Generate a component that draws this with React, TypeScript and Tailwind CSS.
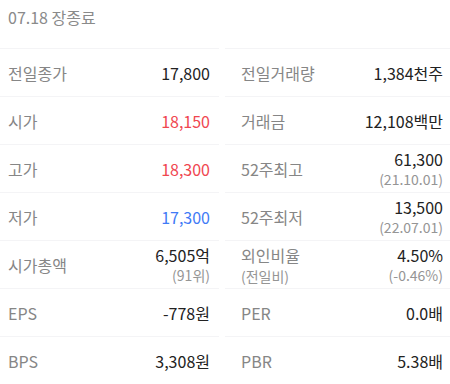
import React from 'react';

type Cell = {
  label: string;
  labelSub?: string;
  value: string;
  unit?: string;
  sub?: string;
  tone?: 'up' | 'down';
};

const rows: [Cell, Cell][] = [
  [
    { label: '전일종가', value: '17,800' },
    { label: '전일거래량', value: '1,384', unit: '천주' },
  ],
  [
    { label: '시가', value: '18,150', tone: 'up' },
    { label: '거래금', value: '12,108', unit: '백만' },
  ],
  [
    { label: '고가', value: '18,300', tone: 'up' },
    { label: '52주최고', value: '61,300', sub: '(21.10.01)' },
  ],
  [
    { label: '저가', value: '17,300', tone: 'down' },
    { label: '52주최저', value: '13,500', sub: '(22.07.01)' },
  ],
  [
    { label: '시가총액', value: '6,505', unit: '억', sub: '(91위)' },
    { label: '외인비율', labelSub: '(전일비)', value: '4.50%', sub: '(-0.46%)' },
  ],
  [
    { label: 'EPS', value: '-778', unit: '원' },
    { label: 'PER', value: '0.0', unit: '배' },
  ],
  [
    { label: 'BPS', value: '3,308', unit: '원' },
    { label: 'PBR', value: '5.38', unit: '배' },
  ],
];

const toneClass = (tone?: 'up' | 'down') =>
  tone === 'up' ? 'text-[#f0464f]' : tone === 'down' ? 'text-[#3f7bf6]' : 'text-[#222]';

const StatCell: React.FC<{ cell: Cell; side: 'left' | 'right' }> = ({ cell, side }) => (
  <div
    className={
      'h-12 flex items-center justify-between border-t border-[#f4f4f6] ' +
      (side === 'left' ? 'pl-2 pr-[9px] mr-[6px]' : 'pl-4 pr-[7px]')
    }
  >
    <div className="flex flex-col gap-[2px]">
      <span className="text-[16px] leading-[20px] text-[#868686]">{cell.label}</span>
      {cell.labelSub && <span className="text-[14px] leading-[18px] text-[#959595]">{cell.labelSub}</span>}
    </div>
    <div className="flex flex-col items-end">
      <span className={'text-[16px] leading-[20px] ' + toneClass(cell.tone)}>
        {cell.value}
        {cell.unit}
      </span>
      {cell.sub && <span className="text-[14px] leading-[20px] text-[#959595]">{cell.sub}</span>}
    </div>
  </div>
);

export default function App() {
  return (
    <div
      className="w-[450px] h-[384px] bg-white overflow-hidden"
      style={{ fontFamily: '"Noto Sans CJK KR", "Noto Sans", sans-serif' }}
    >
      <div className="h-12 px-2 pt-[5px]">
        <span className="text-[16px] leading-6 text-[#8a8a8a]">07.18 장종료</span>
      </div>
      <div className="grid grid-cols-[225px_225px]">
        {rows.map(([l, r], i) => (
          <React.Fragment key={i}>
            <StatCell cell={l} side="left" />
            <StatCell cell={r} side="right" />
          </React.Fragment>
        ))}
      </div>
    </div>
  );
}
